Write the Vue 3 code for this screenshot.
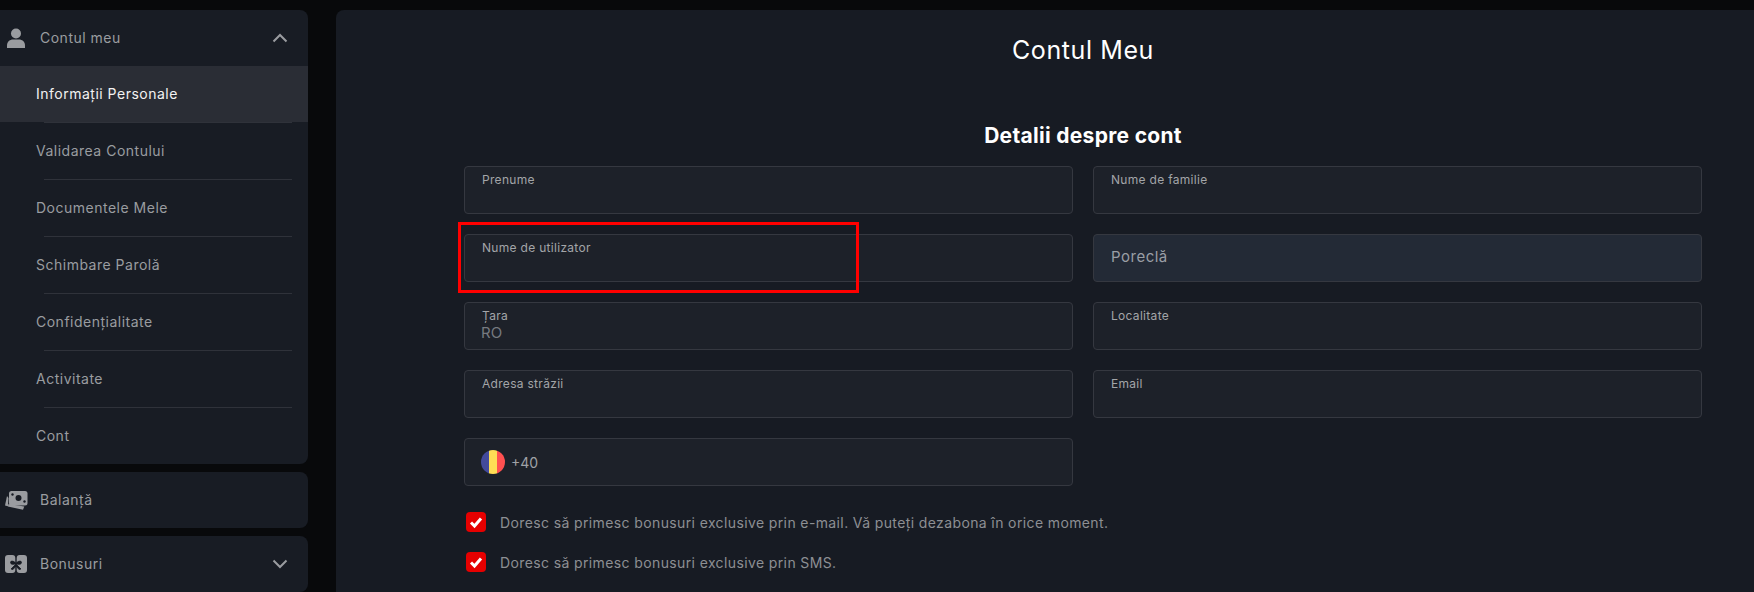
<script setup>
const subItems = [
  { label: 'Informații Personale', active: true },
  { label: 'Validarea Contului' },
  { label: 'Documentele Mele' },
  { label: 'Schimbare Parolă' },
  { label: 'Confidențialitate' },
  { label: 'Activitate' },
  { label: 'Cont' }
]
</script>

<template>
  <div class="page">
    <aside class="sidebar">
      <section class="card">
        <div class="head">
          <svg class="ico" viewBox="0 0 20 20" width="20" height="20"><circle cx="10" cy="5.5" r="5" fill="#9a9ca0"/><path d="M1 20v-2.5C1 13.5 4 11.5 7 11.5h6c3 0 6 2 6 6V20z" fill="#9a9ca0"/></svg>
          <span class="head-text">Contul meu</span>
          <svg class="chev" viewBox="0 0 16 10" width="16" height="10"><path d="M1.500 8.500 8 2l6.500 6.500" fill="none" stroke="#9a9ca0" stroke-width="2"/></svg>
        </div>
        <ul class="subs">
          <li v-for="item in subItems" :key="item.label" class="sub" :class="{ active: item.active }">{{ item.label }}</li>
        </ul>
      </section>
      <section class="card">
        <div class="head">
          <svg class="ico ico-money" viewBox="0 0 24 20" width="24" height="20"><path d="M3 6 1 15.500l3 .8L4.500 8z" fill="#9a9ca0"/><path d="M4.500 14 3.800 16.500 19 19.800l1.300-3.300z" fill="#9a9ca0"/><rect x="5" y="1" width="18.500" height="14.500" rx="2.500" fill="#9a9ca0"/><circle cx="14.500" cy="8" r="3" fill="#181c24"/><circle cx="8.500" cy="4.500" r="1.200" fill="#181c24"/><circle cx="20.500" cy="11.500" r="1.200" fill="#181c24"/></svg>
          <span class="head-text">Balanță</span>
        </div>
      </section>
      <section class="card">
        <div class="head">
          <svg class="ico ico-gift" viewBox="0 0 22 20" width="22" height="20"><rect x="0" y="1" width="10.300" height="18" rx="3" fill="#9a9ca0"/><rect x="11.700" y="1" width="10.300" height="18" rx="3" fill="#9a9ca0"/><path d="M11 9.500C9 6.500 5.500 6.500 5.500 8.500s3 2.500 5.500 1c2.500 1.500 5.500 1 5.500-1s-3.500-2-5.500 1zM10.500 10.500l-4.500 4.500 2 .5 3-3.500 3 3.500 2-.5-4.500-4.500z" fill="#181c24" stroke="#181c24" stroke-width=".8"/></svg>
          <span class="head-text">Bonusuri</span>
          <svg class="chev" viewBox="0 0 16 10" width="16" height="10"><path d="M1.500 1.500 8 8l6.500-6.500" fill="none" stroke="#9a9ca0" stroke-width="2"/></svg>
        </div>
      </section>
    </aside>

    <main class="panel">
      <h1 class="title">Contul Meu</h1>
      <h2 class="heading">Detalii despre cont</h2>
      <div class="form">
        <div class="grid">
          <div class="field"><span class="label">Prenume</span></div>
          <div class="field"><span class="label">Nume de familie</span></div>
          <div class="field"><span class="label">Nume de utilizator</span></div>
          <div class="field disabled"><span class="placeholder">Poreclă</span></div>
          <div class="field"><span class="label">Țara</span><span class="value">RO</span></div>
          <div class="field"><span class="label">Localitate</span></div>
          <div class="field"><span class="label">Adresa străzii</span></div>
          <div class="field"><span class="label">Email</span></div>
          <div class="field phone">
            <svg class="flag" viewBox="0 0 24 24" width="24" height="24">
              <defs><clipPath id="flagclip"><circle cx="12" cy="12" r="12"/></clipPath></defs>
              <g clip-path="url(#flagclip)"><rect width="8" height="24" fill="#434a9b"/><rect x="8" width="8" height="24" fill="#ffdd55"/><rect x="16" width="8" height="24" fill="#ff5050"/></g>
            </svg>
            <span class="phone-code">+40</span>
          </div>
        </div>
        <div class="checks">
          <label class="check">
            <span class="box"><svg viewBox="0 0 20 20" width="20" height="20"><path d="M5 10.500 8.500 14 15 6.500" fill="none" stroke="#fff" stroke-width="3"/></svg></span>
            <span>Doresc să primesc bonusuri exclusive prin e-mail. Vă puteți dezabona în orice moment.</span>
          </label>
          <label class="check">
            <span class="box"><svg viewBox="0 0 20 20" width="20" height="20"><path d="M5 10.500 8.500 14 15 6.500" fill="none" stroke="#fff" stroke-width="3"/></svg></span>
            <span>Doresc să primesc bonusuri exclusive prin SMS.</span>
          </label>
        </div>
        <div class="annotation"></div>
      </div>
    </main>
  </div>
</template>

<style>
html, body { margin: 0; background: #08090b; overflow: hidden; }
</style>

<style scoped>
.page {
  display: flex;
  gap: 28px;
  width: 1754px;
  height: 592px;
  padding-top: 10px;
  box-sizing: border-box;
  overflow: hidden;
  background: #08090b;
  font-family: Inter, "Open Sans", sans-serif;
}
.sidebar {
  flex: 0 0 308px;
  display: flex;
  flex-direction: column;
  gap: 8px;
}
.card {
  background: #181c24;
  border-radius: 0 8px 8px 0;
  overflow: hidden;
  flex-shrink: 0;
}
.head {
  display: flex;
  align-items: center;
  height: 56px;
  padding: 0 20px 0 7px;
  position: relative;
}
.ico { flex-shrink: 0; position: absolute; left: 6px; top: 18px; }
.ico-money { left: 4px; }
.ico-gift { left: 5px; }
.head-text {
  margin-left: 33px;
  padding-bottom: 2px;
  font-size: 14px;
  color: #9a9ca0;
  letter-spacing: 0.5px;
}
.chev { margin-left: auto; }
.subs { list-style: none; margin: 0; padding: 0; }
.sub {
  position: relative;
  height: 56px;
  margin-bottom: 1px;
  line-height: 56px;
  padding-left: 36px;
  font-size: 14px;
  color: #9a9ca0;
  letter-spacing: 0.5px;
  box-sizing: border-box;
}
.sub:not(:last-child)::after {
  content: "";
  position: absolute;
  left: 44px;
  right: 16px;
  bottom: -1px;
  height: 1px;
  background: #2f323a;
}
.sub:last-child { margin-bottom: 0; }
.sub.active { background: #2a2d35; color: #f2f2f2; }
.panel {
  flex: 0 0 1494px;
  box-sizing: border-box;
  height: 600px;
  background: #171b23;
  border-radius: 8px 0 0 0;
  padding: 0 128px;
}
.title {
  margin: 0;
  padding-top: 24px;
  height: 54px;
  box-sizing: content-box;
  line-height: 32px;
  text-align: center;
  font-size: 25px;
  font-weight: 400;
  letter-spacing: 0.6px;
  color: #fff;
}
.heading {
  margin: 0;
  padding-top: 34px;
  height: 44px;
  box-sizing: content-box;
  line-height: 28px;
  text-align: center;
  font-size: 21px;
  font-weight: 700;
  letter-spacing: 0.3px;
  color: #fff;
}
.form { position: relative; }
.grid {
  display: grid;
  grid-template-columns: 1fr 1fr;
  gap: 20px;
}
.field {
  height: 48px;
  box-sizing: border-box;
  background: #1d2129;
  border: 1px solid #353840;
  border-radius: 4px;
  padding: 6px 17px 0;
  display: flex;
  flex-direction: column;
}
.label {
  font-size: 12px;
  line-height: 14px;
  color: #a3a5a8;
  letter-spacing: 0.3px;
}
.value {
  font-size: 15px;
  line-height: 18px;
  margin-top: 1px;
  margin-left: -1px;
  color: #767a80;
}
.disabled {
  background: #232a36;
  justify-content: center;
  padding-top: 0;
  padding-bottom: 3px;
}
.placeholder {
  font-size: 15px;
  color: #9a9ea5;
  letter-spacing: 0.5px;
}
.phone {
  flex-direction: row;
  align-items: center;
  padding: 0 16px;
  gap: 6px;
}
.phone-code { font-size: 14px; color: #a0a2a6; }
.flag { display: block; flex-shrink: 0; }
.checks {
  display: flex;
  flex-direction: column;
  gap: 20px;
  margin-top: 26px;
  padding-left: 2px;
}
.check {
  display: flex;
  align-items: center;
  gap: 14px;
  height: 20px;
  font-size: 14px;
  color: #8d8f93;
  letter-spacing: 0.38px;
}
.box {
  width: 20px;
  height: 20px;
  flex-shrink: 0;
  background: #e60000;
  border-radius: 4px;
}
.box svg { display: block; }
.annotation {
  position: absolute;
  left: -6px;
  top: 56px;
  width: 401px;
  height: 71px;
  box-sizing: border-box;
  border: 3px solid #ff0000;
}
</style>
